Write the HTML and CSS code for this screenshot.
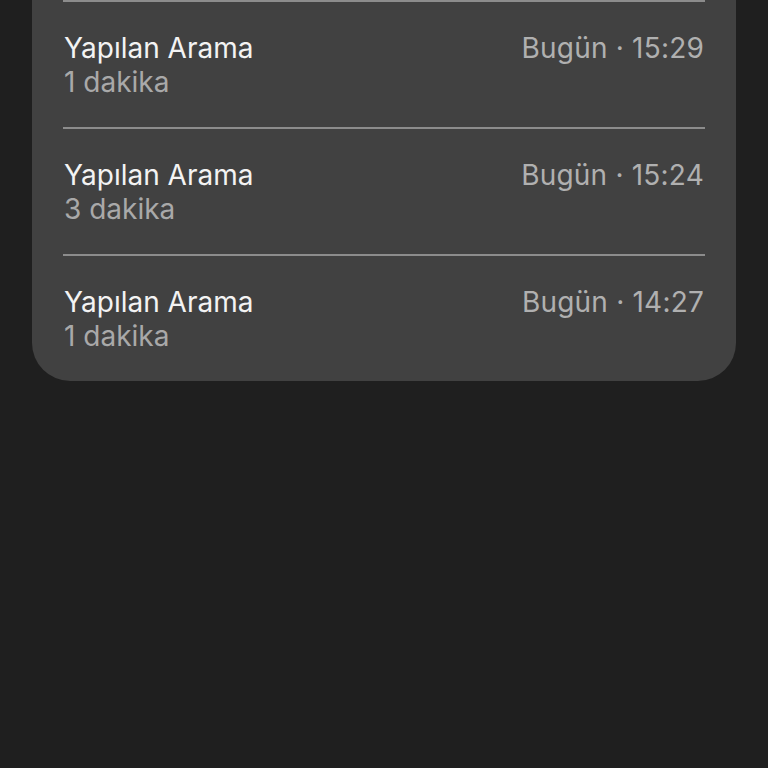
FILE: index.html
```html
<!DOCTYPE html>
<html lang="tr">
<head>
<meta charset="UTF-8">
<meta name="viewport" content="width=device-width, initial-scale=1.0">
<title>Arama Geçmişi</title>
<link rel="stylesheet" href="styles.css">
</head>
<body>

<div class="call-card">
  <div class="call-row">
    <div class="call-info">
      <div class="call-title">Yapılan Arama</div>
      <div class="call-duration">1 dakika</div>
    </div>
    <div class="call-time">Bugün · 15:29</div>
  </div>
  <div class="call-row">
    <div class="call-info">
      <div class="call-title">Yapılan Arama</div>
      <div class="call-duration">3 dakika</div>
    </div>
    <div class="call-time">Bugün · 15:24</div>
  </div>
  <div class="call-row">
    <div class="call-info">
      <div class="call-title">Yapılan Arama</div>
      <div class="call-duration">1 dakika</div>
    </div>
    <div class="call-time">Bugün · 14:27</div>
  </div>
</div>

</body>
</html>
```

FILE: styles.css
```css
body {
  margin: 0;
  height: 768px;
  overflow: hidden;
  background-color: #1f1f1f;
  font-family: Inter, "Noto Sans", sans-serif;
}

.call-card {
  margin: -60px 32px 0;
  padding: 60px 31px 0;
  background-color: #414141;
  border-radius: 38px;
}

.call-row {
  display: flex;
  justify-content: space-between;
  align-items: flex-start;
  border-top: 2px solid #8c8c8c;
  padding: 29px 1px 28px;
}

.call-info {
  display: flex;
  flex-direction: column;
}

.call-title,
.call-duration,
.call-time {
  font-size: 28px;
  line-height: 34px;
}

.call-title {
  color: #f3f3f3;
}

.call-duration {
  color: #a9a9a9;
}

.call-time {
  color: #b0b0b0;
  letter-spacing: 0.2px;
}
```
